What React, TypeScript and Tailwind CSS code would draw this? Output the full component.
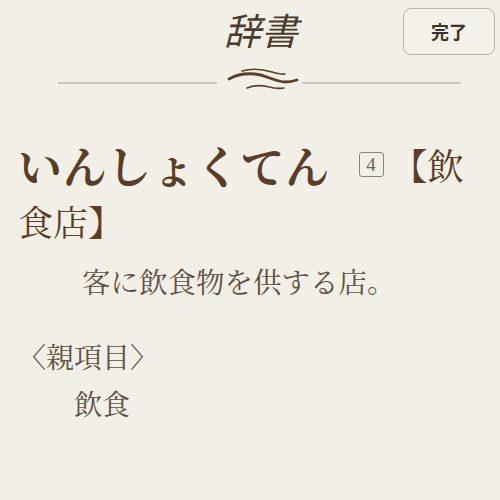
import React from "react";

const serif = '"Noto Serif CJK JP", "Noto Sans CJK JP", serif';
const sans = '"Noto Sans CJK JP", "Noto Sans", sans-serif';

export default function App() {
  return (
    <div className="w-[500px] h-[500px] bg-[#f2efe7] overflow-hidden" style={{ fontFamily: serif }}>
      {/* header */}
      <div className="flex items-start pt-[8px] pr-[5px]">
        <div
          className="ml-[224px] text-[37px] leading-[42px] italic text-[#4a3b2e]"
          style={{ fontFamily: sans }}
        >
          辞書
        </div>
        <button
          className="ml-auto w-[92px] h-[47px] rounded-lg border-[1.5px] border-[#bdb5a8] bg-[#f4f1ea] text-[18px] font-bold text-[#3b342c] flex items-center justify-center"
          style={{ fontFamily: sans }}
        >
          完了
        </button>
      </div>

      {/* divider */}
      <div className="flex items-center h-[34px] mt-[11px] pl-[58px]">
        <div className="w-[159px] h-[1.5px] bg-[#cbc5bb]" />
        <svg width="85" height="34" viewBox="217 66 85 34" className="block">
          <path d="M242 71 C 252 68, 262 69, 272 72 C 277 73.5, 281 74.5, 285 74" fill="none" stroke="#5b3f2a" strokeWidth="1.6" strokeLinecap="round" />
          <path d="M229 79 C 236 75, 244 73, 255 74 C 266 75, 276 82, 285 82 C 290 82, 294 81, 297 80" fill="none" stroke="#5b3f2a" strokeWidth="2.8" strokeLinecap="round" />
          <path d="M247 88 C 253 85.5, 260 85, 267 86.5 C 273 88, 279 89, 284 88" fill="none" stroke="#5b3f2a" strokeWidth="1.6" strokeLinecap="round" />
        </svg>
        <div className="w-[159px] h-[1.5px] bg-[#cbc5bb]" />
      </div>

      {/* heading */}
      <div className="mt-[36px] pl-[18px] text-[#5a3d28]">
        <div className="flex items-center h-[57px]">
          <span className="text-[44px] font-bold leading-none tracking-[0.5px]">いんしょくてん</span>
          <span
            className="ml-[29px] w-[25px] h-[25px] border-[1.5px] border-[#8a847c] rounded-[3px] flex items-center justify-center text-[19px] leading-none text-[#6b6560]"
            style={{ fontFamily: '"Liberation Serif", serif' }}
          >
            4
          </span>
          <span className="ml-[8px] text-[36px] leading-none">【飲</span>
        </div>
        <div className="h-[57px] flex items-center">
          <span className="text-[35px] leading-none">食店】</span>
        </div>
      </div>

      {/* definition */}
      <div className="mt-[11px] pl-[82px] text-[28.5px] leading-[40px] text-[#5d5046]">
        客に飲食物を供する店。
      </div>

      <div className="mt-[35px] pl-[18px] text-[28px] leading-[40px] text-[#5d5046]">
        〈親項目〉
      </div>
      <div className="mt-[7px] pl-[74px] text-[28px] leading-[40px] text-[#5d5046]">
        飲食
      </div>
    </div>
  );
}
